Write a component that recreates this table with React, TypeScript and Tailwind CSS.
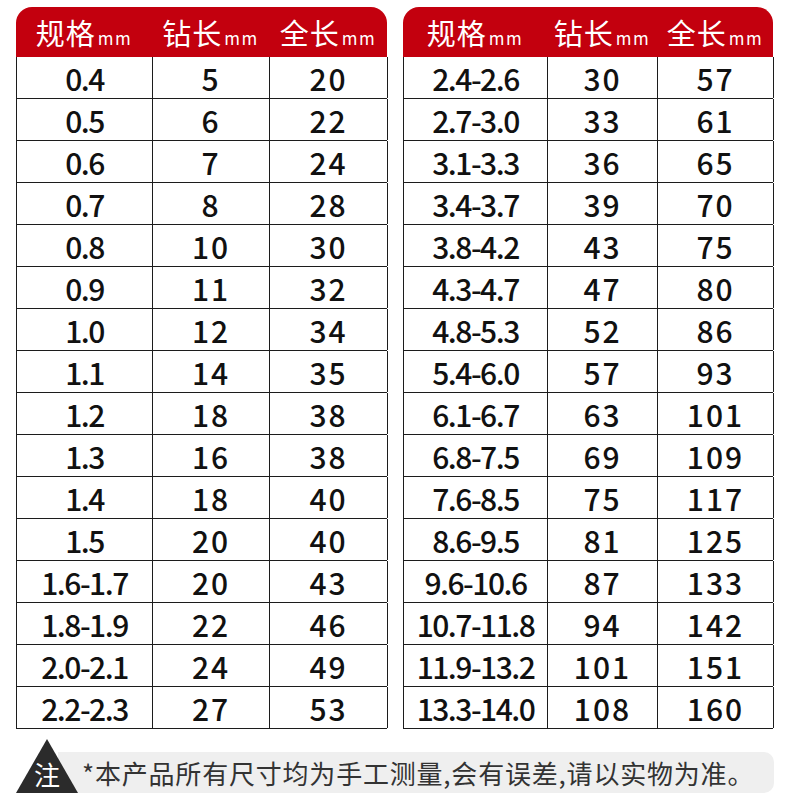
import React from "react";

type Row = [string, string, string];

const LEFT_ROWS: Row[] = [
  ["0.4", "5", "20"],
  ["0.5", "6", "22"],
  ["0.6", "7", "24"],
  ["0.7", "8", "28"],
  ["0.8", "10", "30"],
  ["0.9", "11", "32"],
  ["1.0", "12", "34"],
  ["1.1", "14", "35"],
  ["1.2", "18", "38"],
  ["1.3", "16", "38"],
  ["1.4", "18", "40"],
  ["1.5", "20", "40"],
  ["1.6-1.7", "20", "43"],
  ["1.8-1.9", "22", "46"],
  ["2.0-2.1", "24", "49"],
  ["2.2-2.3", "27", "53"],
];

const RIGHT_ROWS: Row[] = [
  ["2.4-2.6", "30", "57"],
  ["2.7-3.0", "33", "61"],
  ["3.1-3.3", "36", "65"],
  ["3.4-3.7", "39", "70"],
  ["3.8-4.2", "43", "75"],
  ["4.3-4.7", "47", "80"],
  ["4.8-5.3", "52", "86"],
  ["5.4-6.0", "57", "93"],
  ["6.1-6.7", "63", "101"],
  ["6.8-7.5", "69", "109"],
  ["7.6-8.5", "75", "117"],
  ["8.6-9.5", "81", "125"],
  ["9.6-10.6", "87", "133"],
  ["10.7-11.8", "94", "142"],
  ["11.9-13.2", "101", "151"],
  ["13.3-14.0", "108", "160"],
];

const HEADERS = ["规格", "钻长", "全长"];

const SizeTable: React.FC<{ rows: Row[]; cols: string }> = ({ rows, cols }) => (
  <div className="flex flex-col">
    <div className={`grid ${cols} h-[50px] bg-[#c3000e] rounded-t-[16px] items-center text-white`}>
      {HEADERS.map((h) => (
        <div key={h} className="flex items-baseline justify-center">
          <span className="text-[29px] leading-none tracking-[1px]">{h}</span>
          <span className="text-[17px] leading-none tracking-[1.5px] ml-[2px]">mm</span>
        </div>
      ))}
    </div>
    <div className="border-l border-[#1c1c1c]">
      {rows.map((r, i) => (
        <div key={i} className={`grid ${cols} h-[42px] border-b border-[#1c1c1c]`}>
          {r.map((v, j) => (
            <div
              key={j}
              className={`flex items-center justify-center border-r border-[#1c1c1c] text-[30px] font-medium leading-none text-[#111] ${
                j === 0 ? "tracking-[-1.5px]" : "tracking-[2px]"
              }`}
            >
              {v}
            </div>
          ))}
        </div>
      ))}
    </div>
  </div>
);

export default function App() {
  return (
    <div
      className="w-[790px] h-[807px] bg-white pt-[7px] px-4"
      style={{ fontFamily: '"Noto Sans CJK SC", "Noto Sans", sans-serif' }}
    >
      <div className="flex gap-4">
        <div className="w-[371px]">
          <SizeTable rows={LEFT_ROWS} cols="grid-cols-[136px_117px_118px]" />
        </div>
        <div className="w-[370px]">
          <SizeTable rows={RIGHT_ROWS} cols="grid-cols-[144px_110px_116px]" />
        </div>
      </div>

      <div className="flex items-end mt-[10px] h-[54px]">
        <div className="relative z-10 w-[62px] h-[54px] shrink-0">
          <svg width="62" height="54" viewBox="0 0 62 54" className="absolute inset-0">
            <polygon points="31,0 62,54 0,54" fill="#2b2b2b" />
          </svg>
          <span className="absolute left-0 right-0 bottom-[6px] text-center text-white text-[26px] leading-none">
            注
          </span>
        </div>
        <div className="-ml-[20px] flex-1 h-[41px] bg-[#efefef] rounded-r-[10px] flex items-center pl-[24px]">
          <span className="text-[26px] leading-none text-[#333] tracking-[0.8px]">
            *本产品所有尺寸均为手工测量,会有误差,请以实物为准。
          </span>
        </div>
      </div>
    </div>
  );
}
